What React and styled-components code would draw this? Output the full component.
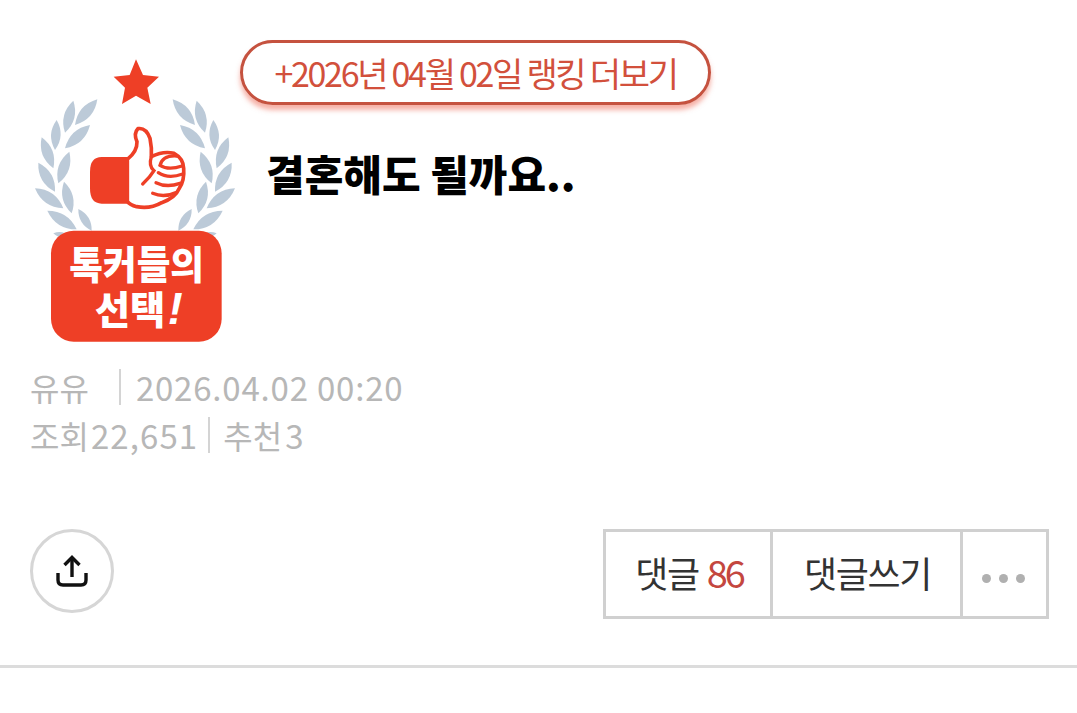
import styled, { createGlobalStyle } from "styled-components"

const leaves = [
  [232, 178, 165, 255],
  [160, 182, 135, 278],
  [210, 255, 135, 325],
  [110, 240, 105, 330],
  [65, 292, 100, 385],
  [148, 335, 115, 430],
  [55, 368, 105, 455],
  [132, 425, 155, 520],
  [45, 445, 130, 505],
  [82, 512, 170, 568],
  [175, 507, 215, 572],
  [100, 580, 150, 590],
]

function leafPath([x1, y1, x2, y2]) {
  const mx = (x1 + x2) / 2
  const my = (y1 + y2) / 2
  const dx = x2 - x1
  const dy = y2 - y1
  const w = 0.32
  return `M${x1} ${y1} Q${mx - dy * w} ${my + dx * w} ${x2} ${y2} Q${mx + dy * w} ${my - dx * w} ${x1} ${y1}Z`
}

export default function App() {
  return (
    <>
      <GlobalStyle />
      <Page>
        <Header>
          <Badge viewBox="0 0 660 930" aria-label="톡커들의 선택!">
            <path
              d="M348 58 L369 105 L417 110 L382 143 L392 192 L348 167 L306 192 L315 143 L281 110 L329 105Z"
              fill="#ee3f26"
            />
            <g fill="#bccad8">
              {leaves.map((l) => (
                <path key={l.join()} d={leafPath(l)} />
              ))}
              <g transform="matrix(-1 0 0 1 690 0)">
                {leaves.map((l) => (
                  <path key={l.join()} d={leafPath(l)} />
                ))}
              </g>
            </g>
            <path d="M328 351 H245 Q210 351 210 395 V445 Q210 491 245 491 H328Z" fill="#ee3f26" />
            <path
              d="M322 358 Q352 335 351 305 Q340 280 354 266 Q378 262 390 295 Q396 325 394 350 Q430 332 462 340 Q490 355 491 385 Q494 420 478 445 Q465 475 425 488 Q390 508 350 500 Q330 495 322 484Z"
              fill="#fff"
              stroke="#ee3f26"
              strokeWidth="11"
              strokeLinejoin="round"
            />
            <g fill="none" stroke="#ee3f26" strokeWidth="10" strokeLinecap="round">
              <path d="M394 350 Q385 378 402 392 Q390 412 368 432" />
              <path d="M470 348 Q428 345 420 376 Q445 392 486 378" />
              <path d="M415 398 Q445 418 488 402" />
              <path d="M408 428 Q440 444 480 430" />
              <path d="M398 460 Q432 474 466 458" />
            </g>
            <rect x="93" y="572" width="512" height="333" rx="68" fill="#ee3f26" />
            <BadgeText x="350" y="716" textLength="404" lengthAdjust="spacingAndGlyphs">
              톡커들의
            </BadgeText>
            <BadgeText x="330" y="853" textLength="212" lengthAdjust="spacingAndGlyphs">
              선택
            </BadgeText>
            <BadgeMark x="466" y="853">
              !
            </BadgeMark>
          </Badge>
          <HeadColumn>
            <RankLink>+2026년 04월 02일 랭킹 더보기</RankLink>
            <Title>결혼해도 될까요..</Title>
          </HeadColumn>
        </Header>

        <Meta>
          <MetaRow>
            <span>유유</span>
            <Bar $left={30} $right={15} />
            <MetaNumber $spacing={0.8}>2026.04.02 00:20</MetaNumber>
          </MetaRow>
          <MetaRow>
            <span>조회</span>
            <MetaNumber $left={2}>22,651</MetaNumber>
            <Bar $left={10} $right={13} />
            <span>추천</span>
            <MetaNumber $left={3}>3</MetaNumber>
          </MetaRow>
        </Meta>

        <Actions>
          <ShareButton aria-label="공유">
            <svg width="36" height="36" viewBox="0 0 36 36" fill="none" stroke="#111" strokeWidth="3.4">
              <path d="M18 24 V5" />
              <path d="M10.5 12 L18 4.5 L25.5 12" />
              <path d="M4 20 V27 Q4 32 9 32 H27 Q32 32 32 27 V20" />
            </svg>
          </ShareButton>
          <ButtonGroup>
            <GroupButton $width={167}>
              댓글<Count>86</Count>
            </GroupButton>
            <GroupButton $width={190}>댓글쓰기</GroupButton>
            <MoreButton aria-label="더보기">
              <Dot />
              <Dot />
              <Dot />
            </MoreButton>
          </ButtonGroup>
        </Actions>
        <Divider />
      </Page>
    </>
  )
}

const GlobalStyle = createGlobalStyle`
  * {
    box-sizing: border-box;
  }
  body {
    margin: 0;
    background: #ffffff;
    font-family: "Noto Sans CJK KR", "Noto Sans", sans-serif;
  }
`

const Page = styled.div`
  width: 1077px;
  height: 713px;
  overflow: hidden;
  background: #ffffff;
`

const Header = styled.div`
  display: flex;
  align-items: flex-start;
  padding: 40px 0 0 20px;
  height: 350px;
`

const Badge = styled.svg`
  width: 220px;
  height: 310px;
  flex-shrink: 0;
`

const BadgeText = styled.text`
  font-family: "Noto Sans CJK KR", sans-serif;
  font-size: 116px;
  font-weight: 900;
  fill: #ffffff;
  text-anchor: middle;
`

const BadgeMark = styled.text`
  font-family: "Liberation Sans", sans-serif;
  font-size: 135px;
  font-weight: 700;
  font-style: italic;
  fill: #ffffff;
  text-anchor: middle;
`

const HeadColumn = styled.div`
  display: flex;
  flex-direction: column;
  align-items: flex-start;
`

const RankLink = styled.div`
  width: 471px;
  height: 65px;
  display: flex;
  align-items: center;
  justify-content: center;
  border: 3px solid #c5523f;
  border-radius: 33px;
  box-shadow: 0 5px 5px rgba(238, 100, 80, 0.5);
  color: #d2503c;
  font-size: 34px;
  letter-spacing: -2.3px;
  white-space: nowrap;
`

const Title = styled.h1`
  margin: 38px 0 0 26px;
  color: #000000;
  font-size: 42px;
  font-weight: 900;
  line-height: 60px;
  letter-spacing: 0;
  white-space: nowrap;
`

const Meta = styled.div`
  padding: 13px 0 0 30px;
  color: #b7b7b7;
  font-size: 32px;
  font-weight: 400;
`

const MetaRow = styled.div`
  display: flex;
  align-items: center;
  height: 48px;
  white-space: nowrap;
`

const MetaNumber = styled.span`
  margin-left: ${(props) => props.$left || 0}px;
  font-size: 33px;
  letter-spacing: ${(props) => props.$spacing || 1.1}px;
`

const Bar = styled.i`
  width: 2px;
  height: 36px;
  background: #d4d4d4;
  margin: 0 ${(props) => props.$right}px 0 ${(props) => props.$left}px;
`

const Actions = styled.div`
  display: flex;
  align-items: flex-start;
  justify-content: space-between;
  padding: 0 28px 0 30px;
  margin-top: 70px;
`

const ShareButton = styled.div`
  width: 84px;
  height: 84px;
  border: 3px solid #d6d6d6;
  border-radius: 50%;
  display: flex;
  align-items: center;
  justify-content: center;
`

const ButtonGroup = styled.div`
  display: flex;
  width: 446px;
  height: 90px;
  border: 3px solid #d0d0d0;
`

const GroupButton = styled.div`
  width: ${(props) => props.$width}px;
  display: flex;
  align-items: center;
  justify-content: center;
  gap: 8px;
  padding: 0 0 5px 2px;
  border-right: 3px solid #d0d0d0;
  color: #333333;
  font-size: 36px;
  font-weight: 400;
  letter-spacing: -1.4px;
  white-space: nowrap;
`

const Count = styled.span`
  color: #c4473f;
  font-size: 38px;
  letter-spacing: -3px;
`

const MoreButton = styled.div`
  flex: 1;
  display: flex;
  align-items: center;
  justify-content: center;
  gap: 8px;
  padding: 8px 3px 0 0;
`

const Dot = styled.span`
  width: 9px;
  height: 9px;
  border-radius: 50%;
  background: #b0b0b0;
`

const Divider = styled.div`
  height: 3px;
  margin-top: 46px;
  background: #dcdcdc;
`
